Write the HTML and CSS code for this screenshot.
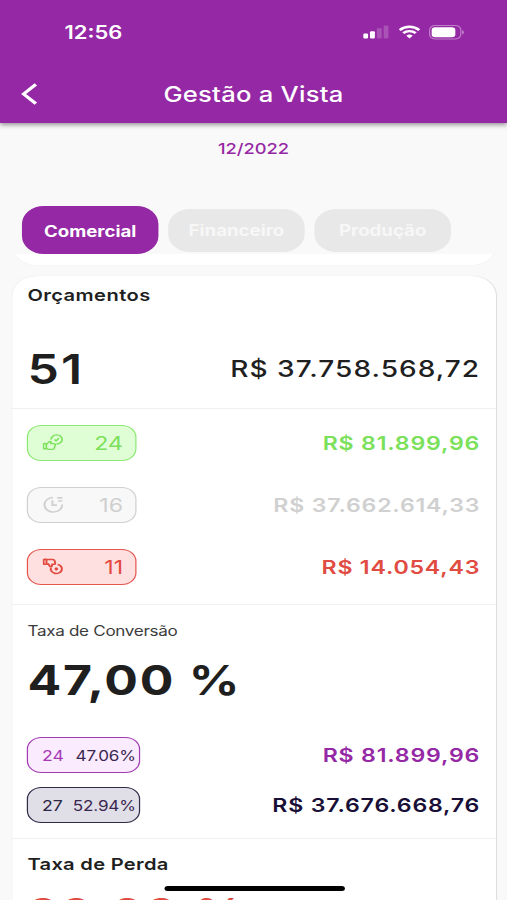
FILE: index.html
```html
<!DOCTYPE html>
<html lang="pt-BR">
<head>
    <meta charset="UTF-8">
    <meta name="viewport" content="width=device-width, initial-scale=1.0">
    <title>Gestão a Vista</title>
    <link rel="stylesheet" href="styles.css">
</head>
<body>

<div class="screen">
    <header class="header">
        <div class="status-bar">
            <span class="clock">12:56</span>
            <div class="status-icons">
                <svg width="21" height="14" viewBox="0 0 21 14" fill="#fff">
                    <rect x="0" y="8.5" width="4" height="5" rx="1"/>
                    <rect x="5.6" y="6.2" width="4" height="7.3" rx="1"/>
                    <rect x="11.2" y="3.2" width="4" height="10.3" rx="1" opacity=".2"/>
                    <rect x="16.8" y="0.5" width="4" height="13" rx="1" opacity=".2"/>
                </svg>
                <svg width="18" height="14" viewBox="0 0 18 14" fill="none" stroke="#fff" stroke-width="2.4">
                    <path d="M1 5.1a11.4 11.4 0 0 1 16 0"/>
                    <path d="M3.9 8.2a7.3 7.3 0 0 1 10.2 0"/>
                    <path d="M9 13.4l-2.6-2.7a3.7 3.7 0 0 1 5.2 0z" fill="#fff" stroke="none"/>
                </svg>
                <svg width="30" height="15" viewBox="0 0 30 15">
                    <rect x=".5" y=".6" width="25.6" height="13.4" rx="4.4" fill="none" stroke="#fff" opacity=".4"/>
                    <rect x="2.2" y="2.3" width="19.4" height="10" rx="2.8" fill="#fff"/>
                    <path d="M27.3 5.2v4.2c1.8-.7 1.8-3.5 0-4.2z" fill="#fff" opacity=".45"/>
                </svg>
            </div>
        </div>
        <div class="title-bar">
            <svg class="back" width="14" height="22" viewBox="0 0 14 22" fill="none" stroke="#fff" stroke-width="2.9">
                <path d="M12.4 1.4L2.4 11l10 9.6"/>
            </svg>
            <h1 class="title">Gestão a Vista</h1>
        </div>
    </header>

    <div class="period">12/2022</div>

    <nav class="tabs">
        <div class="tab active"><span>Comercial</span></div>
        <div class="tab"><span>Financeiro</span></div>
        <div class="tab"><span>Produção</span></div>
    </nav>

    <main class="content">
        <div class="card-end"></div>

        <div class="card">
            <section class="section budgets">
                <h2 class="label">Orçamentos</h2>
                <div class="row total">
                    <span class="big">51</span>
                    <span class="amount large">R$ 37.758.568,72</span>
                </div>
            </section>

            <section class="section statuses">
                <div class="row">
                    <div class="chip green">
                        <svg width="17" height="17" viewBox="0 0 20 20" fill="none" stroke="currentColor" stroke-width="1.6">
                            <path d="M8.2 6.6A5.3 5.3 0 1 1 13.2 11.7"/>
                            <path d="M11.4 6.4l1.5 1.5L15.8 5"/>
                            <rect x=".8" y="11.2" width="2.8" height="6.2" rx="1"/>
                            <path d="M3.6 12.2L6.6 8.9c1-.6 1.7.2 1.5 1.2l-.2 1.3h3c1.1 0 1.5.8 1.2 1.7l-1 3.8c-.3.9-.9 1.2-1.7 1.2H5.6l-2-1"/>
                        </svg>
                        <span class="count">24</span>
                    </div>
                    <span class="amount green-text">R$ 81.899,96</span>
                </div>
                <div class="row">
                    <div class="chip grey">
                        <svg width="17" height="17" viewBox="0 0 20 20" fill="none" stroke="currentColor" stroke-width="1.9">
                            <path d="M10 1.7A8.6 8.6 0 1 0 18.9 10"/>
                            <path d="M9.4 5v5.8h4.4"/>
                            <path d="M14 2.2h5M15 5.9h4"/>
                        </svg>
                        <span class="count">16</span>
                    </div>
                    <span class="amount grey-text">R$ 37.662.614,33</span>
                </div>
                <div class="row">
                    <div class="chip red">
                        <svg width="17" height="17" viewBox="0 0 20 20" fill="none" stroke="currentColor" stroke-width="1.9">
                            <rect x=".9" y="1.6" width="2.8" height="5.8" rx=".8"/>
                            <path d="M3.8 1.8h5.9c.9 0 1.6.4 1.8 1.3l.6 2.7c.2.9-.3 1.6-1.2 1.6H9.2L8.8 9.8c-.9.9-1.8.4-2-.4L5.6 7.2H3.8"/>
                            <path d="M14.4 7.6A5.4 5.4 0 1 1 8 11.4"/>
                            <path d="M12 11.7l2.4 2.4M14.4 11.7l-2.4 2.4"/>
                        </svg>
                        <span class="count">11</span>
                    </div>
                    <span class="amount red-text">R$ 14.054,43</span>
                </div>
            </section>

            <section class="section conversion">
                <h2 class="label light">Taxa de Conversão</h2>
                <div class="big rate">47,00 %</div>
                <div class="row">
                    <div class="chip wide purple">
                        <span class="num">24</span>
                        <span class="percent">47.06%</span>
                    </div>
                    <span class="amount purple-text">R$ 81.899,96</span>
                </div>
                <div class="row">
                    <div class="chip wide navy">
                        <span class="num">27</span>
                        <span class="percent">52.94%</span>
                    </div>
                    <span class="amount navy-text">R$ 37.676.668,76</span>
                </div>
            </section>

            <section class="section loss">
                <h2 class="label">Taxa de Perda</h2>
                <div class="big red-text">22,92 %</div>
            </section>
        </div>
    </main>

    <div class="home-indicator"></div>
</div>

</body>
</html>
```
FILE: styles.css
```css
body {
    font-family: Inter, 'Liberation Sans', sans-serif;
    background-color: #f9f9f9;
    color: #1f1f1f;
    margin: 0;
    overflow: hidden;
}

/* the phone screen is laid out 416px wide and stretched to the full width */
.screen {
    position: relative;
    display: flex;
    flex-direction: column;
    width: 416px;
    height: 900px;
    overflow: hidden;
    transform: scaleX(1.21875);
    transform-origin: 0 0;
}

.header {
    flex: none;
    height: 123px;
    background-color: #9528a4;
    color: #fff;
    box-shadow: 0 2px 4px rgba(0, 0, 0, 0.4);
}

.status-bar {
    display: flex;
    justify-content: space-between;
    align-items: center;
    height: 64px;
    padding: 0 34px 0 53px;
}

.clock {
    font-size: 18px;
    font-weight: 600;
}

.status-icons {
    display: flex;
    align-items: center;
    gap: 7.5px;
}

.title-bar {
    display: grid;
    grid-template-columns: 18px 1fr 18px;
    align-items: center;
    height: 59px;
    padding: 0 17px;
}

.title {
    margin: 0;
    padding-top: 1px;
    text-align: center;
    font-size: 21px;
    font-weight: 500;
    letter-spacing: 0.2px;
}

.period {
    flex: none;
    height: 50px;
    line-height: 52px;
    text-align: center;
    font-size: 15px;
    font-weight: 500;
    color: #9528a4;
}

.tabs {
    flex: none;
    display: flex;
    align-items: center;
    gap: 8px;
    height: 48px;
    margin-top: 33px;
    padding-left: 18px;
}

.tab {
    display: flex;
    align-items: center;
    justify-content: center;
    width: 112px;
    height: 43px;
    border-radius: 18px;
    background-color: #e8e8e8;
    color: #f7f7f7;
    font-size: 15.3px;
    font-weight: 700;
}

.tab.active {
    box-sizing: border-box;
    height: 48px;
    padding-top: 2px;
    background-color: #9528a4;
    color: #fff;
}

.content {
    flex: 1;
    min-height: 0;
    overflow: hidden;
    padding: 0 9px 0 9.5px;
}

/* bottom of the card that is scrolled out above */
.card-end {
    height: 40px;
    margin-top: -29px;
    border-radius: 20px;
    background-color: #fff;
    box-shadow: 0 0 1px rgba(0, 0, 0, 0.1);
}

.card {
    height: 700px;
    margin-top: 11px;
    border-radius: 20px;
    background-color: #fff;
    box-shadow: 0 0 1px rgba(0, 0, 0, 0.12);
}

.section {
    box-sizing: border-box;
    padding: 0 13px;
    border-bottom: 1px solid #f0f0f0;
}

.budgets {
    height: 133px;
}

.statuses {
    display: flex;
    flex-direction: column;
    gap: 26px;
    height: 196px;
    padding-top: 16px;
}

.conversion {
    height: 234px;
}

.loss {
    border: none;
}

.row {
    display: flex;
    justify-content: space-between;
    align-items: center;
    height: 35px;
}

.statuses .row {
    height: 36px;
}

.row.total {
    height: 110px;
}

.conversion .row + .row {
    margin-top: 15px;
}

.label {
    margin: 0;
    height: 38px;
    line-height: 38px;
    font-size: 16.5px;
    font-weight: 600;
    letter-spacing: 0.35px;
}

.label.light {
    height: 50px;
    line-height: 52px;
    font-size: 14px;
    font-weight: 400;
    letter-spacing: -0.25px;
    color: #3c3c3c;
}

.loss .label {
    height: 49px;
    line-height: 51px;
    letter-spacing: 0.25px;
}

.big {
    font-size: 41px;
    font-weight: 600;
    line-height: 50px;
    letter-spacing: 1.8px;
}

.rate {
    height: 83px;
    font-weight: 700;
    letter-spacing: 1.4px;
}

.amount {
    font-size: 19px;
    font-weight: 600;
    letter-spacing: 0.65px;
}

.amount.large {
    font-size: 23px;
    font-weight: 500;
    letter-spacing: 0.85px;
}

.chip {
    box-sizing: border-box;
    display: flex;
    align-items: center;
    justify-content: space-between;
    width: 90px;
    height: 36px;
    margin: -1px 0 0 -0.5px;
    padding: 0 10px 0 12px;
    border: 1px solid;
    border-radius: 12px;
}

.count {
    padding-top: 1px;
    font-size: 19px;
    font-weight: 400;
}

.chip.wide {
    width: 93px;
    padding: 0 2.5px 0 11.5px;
    font-size: 14.5px;
}

.percent {
    font-size: 14px;
    letter-spacing: -0.1px;
    color: #3a2750;
}

.green {
    border-color: #8be873;
    background-color: #e0fed6;
    color: #7be05a;
}

.grey {
    border-color: #d0d0d0;
    background-color: #f8f8f8;
    color: #d0d0d0;
}

.red {
    border-color: #e4564e;
    background-color: #fde0df;
    color: #e4493f;
}

.purple {
    border-color: #a03bb2;
    background-color: #fbebff;
    color: #a63ab5;
}

.navy {
    border-color: #2f2a48;
    background-color: #e0dee6;
    color: #2c2545;
}

.green-text {
    color: #7be05a;
}

.grey-text {
    color: #d0d0d0;
}

.red-text {
    color: #e04b42;
}

.purple-text {
    color: #9528a4;
}

.navy-text {
    color: #190f36;
}

.home-indicator {
    position: absolute;
    left: 134.5px;
    bottom: 9px;
    width: 148px;
    height: 5px;
    border-radius: 3px;
    background-color: #000;
}
```
